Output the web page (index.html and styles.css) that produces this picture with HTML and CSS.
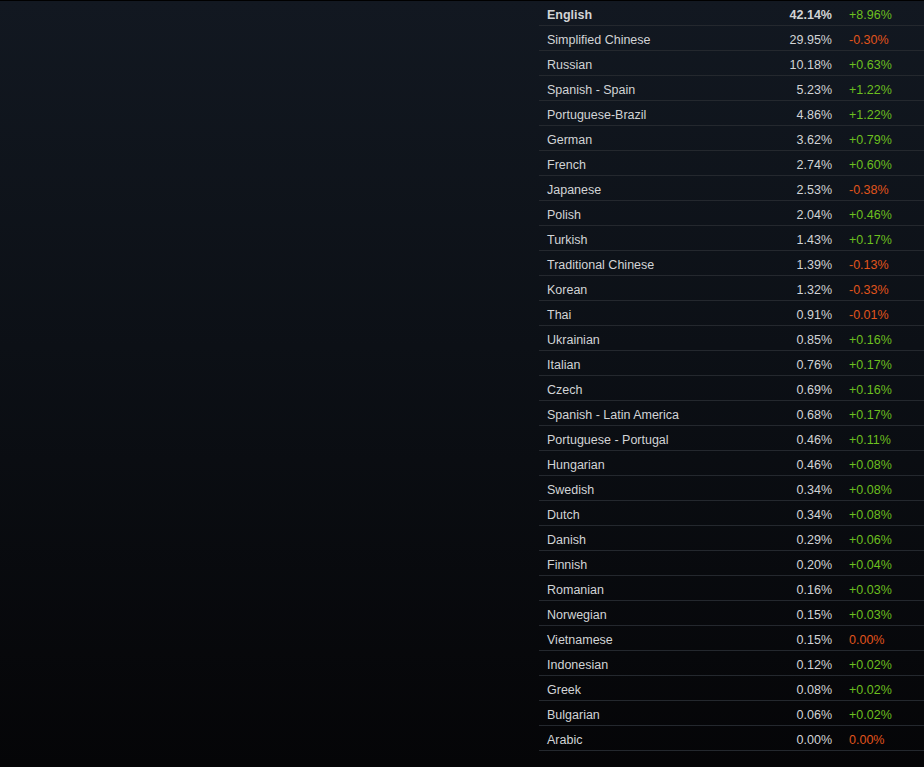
FILE: index.html
```html
<!DOCTYPE html>
<html lang="en">
<head>
  <meta charset="UTF-8">
  <title>Language Usage</title>
  <link rel="stylesheet" href="styles.css">
</head>
<body>
  <div class="page">
    <div class="side"></div>
    <table class="langs">
      <tbody>
        <tr class="top"><td class="name">English</td><td class="pct">42.14%</td><td class="chg up">+8.96%</td></tr>
        <tr><td class="name">Simplified Chinese</td><td class="pct">29.95%</td><td class="chg down">-0.30%</td></tr>
        <tr><td class="name">Russian</td><td class="pct">10.18%</td><td class="chg up">+0.63%</td></tr>
        <tr><td class="name">Spanish - Spain</td><td class="pct">5.23%</td><td class="chg up">+1.22%</td></tr>
        <tr><td class="name">Portuguese-Brazil</td><td class="pct">4.86%</td><td class="chg up">+1.22%</td></tr>
        <tr><td class="name">German</td><td class="pct">3.62%</td><td class="chg up">+0.79%</td></tr>
        <tr><td class="name">French</td><td class="pct">2.74%</td><td class="chg up">+0.60%</td></tr>
        <tr><td class="name">Japanese</td><td class="pct">2.53%</td><td class="chg down">-0.38%</td></tr>
        <tr><td class="name">Polish</td><td class="pct">2.04%</td><td class="chg up">+0.46%</td></tr>
        <tr><td class="name">Turkish</td><td class="pct">1.43%</td><td class="chg up">+0.17%</td></tr>
        <tr><td class="name">Traditional Chinese</td><td class="pct">1.39%</td><td class="chg down">-0.13%</td></tr>
        <tr><td class="name">Korean</td><td class="pct">1.32%</td><td class="chg down">-0.33%</td></tr>
        <tr><td class="name">Thai</td><td class="pct">0.91%</td><td class="chg down">-0.01%</td></tr>
        <tr><td class="name">Ukrainian</td><td class="pct">0.85%</td><td class="chg up">+0.16%</td></tr>
        <tr><td class="name">Italian</td><td class="pct">0.76%</td><td class="chg up">+0.17%</td></tr>
        <tr><td class="name">Czech</td><td class="pct">0.69%</td><td class="chg up">+0.16%</td></tr>
        <tr><td class="name">Spanish - Latin America</td><td class="pct">0.68%</td><td class="chg up">+0.17%</td></tr>
        <tr><td class="name">Portuguese - Portugal</td><td class="pct">0.46%</td><td class="chg up">+0.11%</td></tr>
        <tr><td class="name">Hungarian</td><td class="pct">0.46%</td><td class="chg up">+0.08%</td></tr>
        <tr><td class="name">Swedish</td><td class="pct">0.34%</td><td class="chg up">+0.08%</td></tr>
        <tr><td class="name">Dutch</td><td class="pct">0.34%</td><td class="chg up">+0.08%</td></tr>
        <tr><td class="name">Danish</td><td class="pct">0.29%</td><td class="chg up">+0.06%</td></tr>
        <tr><td class="name">Finnish</td><td class="pct">0.20%</td><td class="chg up">+0.04%</td></tr>
        <tr><td class="name">Romanian</td><td class="pct">0.16%</td><td class="chg up">+0.03%</td></tr>
        <tr><td class="name">Norwegian</td><td class="pct">0.15%</td><td class="chg up">+0.03%</td></tr>
        <tr><td class="name">Vietnamese</td><td class="pct">0.15%</td><td class="chg down">0.00%</td></tr>
        <tr><td class="name">Indonesian</td><td class="pct">0.12%</td><td class="chg up">+0.02%</td></tr>
        <tr><td class="name">Greek</td><td class="pct">0.08%</td><td class="chg up">+0.02%</td></tr>
        <tr><td class="name">Bulgarian</td><td class="pct">0.06%</td><td class="chg up">+0.02%</td></tr>
        <tr><td class="name">Arabic</td><td class="pct">0.00%</td><td class="chg down">0.00%</td></tr>
      </tbody>
    </table>
  </div>
</body>
</html>
```

FILE: styles.css
```css
html {
  background: #050507;
}
body {
  margin: 0;
  padding: 0;
  min-height: 767px;
  border-top: 1px solid #000;
  box-sizing: border-box;
  background: linear-gradient(to bottom, #121821 0%, #0c1016 45%, #050507 100%);
  font-family: "Liberation Sans", Arial, sans-serif;
  font-size: 12.5px;
  color: #d2d4d6;
}
.page {
  display: flex;
}
.side {
  width: 539px;
  flex-shrink: 0;
}
.langs {
  flex: 1;
  border-collapse: collapse;
}
.langs td {
  padding: 4px 0 0;
  line-height: 20px;
  border-bottom: 1px solid #24282e;
  white-space: nowrap;
}
.langs .name {
  padding-left: 8px;
}
.langs .pct {
  text-align: right;
  width: 80px;
}
.langs .chg {
  width: 75px;
  padding-left: 17px;
}
.top .name, .top .pct {
  font-weight: bold;
}
.up {
  color: #6cbf1f;
}
.down {
  color: #e0541c;
}
```
